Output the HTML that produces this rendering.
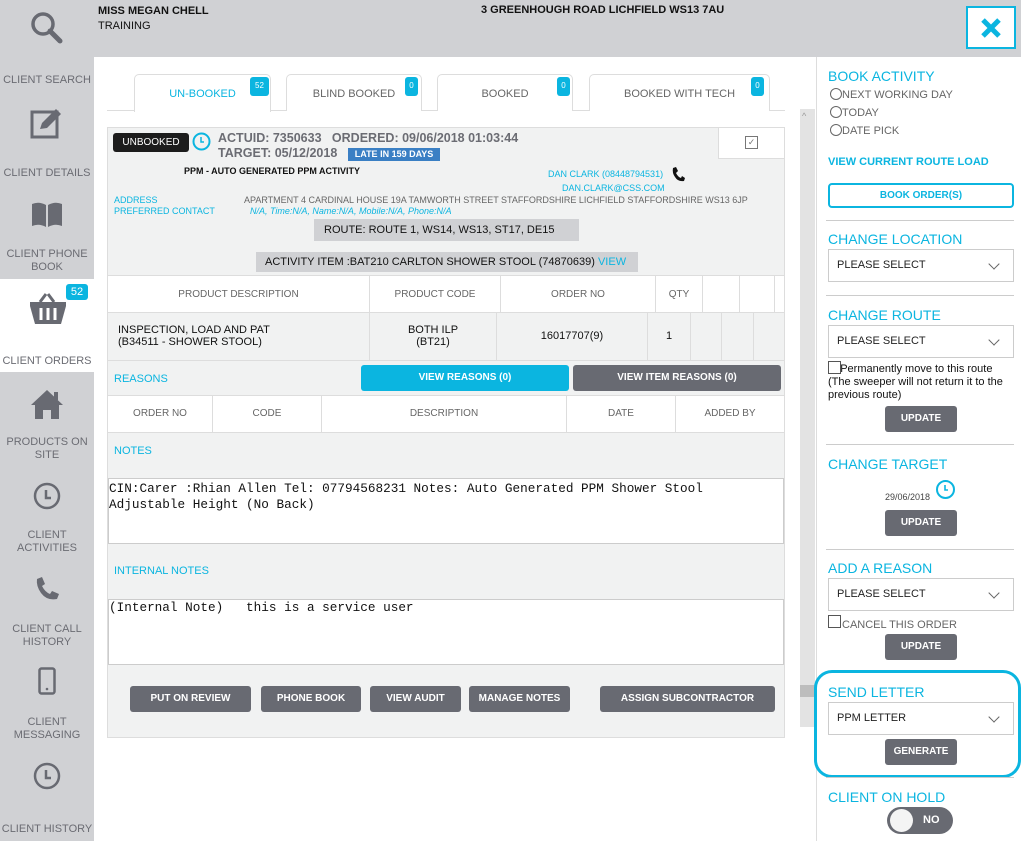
<!DOCTYPE html>
<html><head><meta charset="utf-8"><style>
*{margin:0;padding:0;box-sizing:border-box}
body{width:1021px;height:841px;position:relative;overflow:hidden;background:#fff;font-family:"Liberation Sans",Arial,sans-serif;}
.a{position:absolute}
.sb{color:#6b6c73;font-size:11px;text-align:center;width:94px;left:0;line-height:13px}
.c{color:#0bb5e0}
.tab{position:absolute;top:74px;height:37px;border:1px solid #ddd;border-bottom:none;border-radius:5px 5px 0 0;background:#fff;color:#666;font-size:11px;text-align:center;line-height:38px}
.bdg{position:absolute;background:#0bb5e0;color:#fff;font-size:8px;border-radius:3px;text-align:center;line-height:17px;height:19px;top:3px}
.btn{position:absolute;background:#686a72;color:#fff;font-size:10px;font-weight:bold;text-align:center;border-radius:3px;line-height:26px;height:26px}
.cell{position:absolute;border-right:1px solid #ddd;text-align:center;font-size:10px;color:#666}
.h{position:absolute;left:828px;color:#0bb5e0;font-size:14px}
.sel{position:absolute;left:828px;width:186px;height:33px;border:1px solid #ccc;background:#fff;font-size:11px;color:#222;padding-left:8px;line-height:31px}
.sel:after{content:"";position:absolute;right:15px;top:10px;width:7px;height:7px;border-right:1px solid #666;border-bottom:1px solid #666;transform:rotate(45deg)}
.div{position:absolute;left:826px;width:188px;height:1px;background:#ccc}
.rad{position:absolute;left:830px;font-size:11px;color:#666}
.rad:before{content:"";display:inline-block;width:10px;height:10px;border:1px solid #666;border-radius:50%;vertical-align:-2px}
</style></head><body>
<!-- header -->
<div class="a" style="left:0;top:0;width:1021px;height:57px;background:#d0d1d4"></div>
<div class="a" style="left:98px;top:4px;font-size:11px;font-weight:bold;color:#111;line-height:15px">MISS MEGAN CHELL<br><span style="font-weight:normal">TRAINING</span></div>
<div class="a" style="left:481px;top:4px;font-size:11px;font-weight:bold;color:#111">3 GREENHOUGH ROAD LICHFIELD WS13 7AU</div>
<div class="a" style="left:966px;top:6px;width:50px;height:43px;background:#fff;border:2px solid #0bb5e0"><svg width="46" height="39" viewBox="0 0 46 39"><path d="M15 12 L31 28 M31 12 L15 28" stroke="#0bb5e0" stroke-width="5"/></svg></div>
<!-- sidebar -->
<div class="a" style="left:0;top:57px;width:94px;height:784px;background:#d0d1d4"></div>
<div class="a" style="left:0;top:279px;width:94px;height:93px;background:#fff"></div>
<svg class="a" style="left:29px;top:10px" width="36" height="36"><circle cx="14" cy="14" r="10" fill="none" stroke="#686a72" stroke-width="3.5"/><path d="M21 21 L31 31" stroke="#686a72" stroke-width="5" stroke-linecap="round"/></svg>
<div class="a sb" style="top:74px">CLIENT SEARCH</div>
<svg class="a" style="left:30px;top:107px" width="34" height="32"><rect x="2" y="5" width="25" height="25" fill="none" stroke="#686a72" stroke-width="3"/><path d="M10 22 L12 16 L26 2 L31 7 L17 21 Z" fill="#686a72"/></svg>
<div class="a sb" style="top:167px">CLIENT DETAILS</div>
<svg class="a" style="left:30px;top:200px" width="34" height="30"><path d="M2 4 Q9 1 16 5 L16 27 Q9 23 2 26 Z M18 5 Q25 1 32 4 L32 26 Q25 23 18 27 Z" fill="#686a72"/></svg>
<div class="a sb" style="top:248px">CLIENT PHONE<br>BOOK</div>
<svg class="a" style="left:28px;top:292px" width="40" height="36"><path d="M12 10 L18 2 M26 10 L20 2" stroke="#686a72" stroke-width="3"/><path d="M2 10 H38 V14 L33 32 H7 L2 14 Z" fill="#686a72"/><path d="M13 16 V28 M20 16 V28 M27 16 V28" stroke="#fff" stroke-width="3"/></svg>
<div class="a" style="left:66px;top:284px;width:22px;height:16px;background:#0bb5e0;color:#fff;font-size:11px;text-align:center;line-height:16px;border-radius:3px">52</div>
<div class="a sb" style="top:355px">CLIENT ORDERS</div>
<svg class="a" style="left:30px;top:388px" width="34" height="32"><path d="M17 2 L33 17 H29 V31 H21 V22 H13 V31 H5 V17 H1 Z" fill="#686a72"/><rect x="24" y="4" width="4" height="8" fill="#686a72"/></svg>
<div class="a sb" style="top:436px">PRODUCTS ON<br>SITE</div>
<svg class="a" style="left:32px;top:481px" width="30" height="30"><circle cx="15" cy="15" r="12" fill="none" stroke="#686a72" stroke-width="2.5"/><path d="M14 9 V17 H19" fill="none" stroke="#686a72" stroke-width="2.5"/></svg>
<div class="a sb" style="top:529px">CLIENT<br>ACTIVITIES</div>
<svg class="a" style="left:33px;top:575px" width="28" height="28"><path d="M4 4 L9 2 L12 9 L9 11 Q12 17 17 19 L19 16 L26 19 L24 24 Q14 26 8 18 Q3 11 4 4 Z" fill="#686a72"/></svg>
<div class="a sb" style="top:623px">CLIENT CALL<br>HISTORY</div>
<svg class="a" style="left:38px;top:667px" width="18" height="28"><rect x="1.5" y="1.5" width="15" height="25" rx="2" fill="none" stroke="#686a72" stroke-width="2.5"/><circle cx="9" cy="22" r="1.3" fill="#686a72"/></svg>
<div class="a sb" style="top:716px">CLIENT<br>MESSAGING</div>
<svg class="a" style="left:32px;top:761px" width="30" height="30"><circle cx="15" cy="15" r="12" fill="none" stroke="#686a72" stroke-width="2.5"/><path d="M14 9 V17 H19" fill="none" stroke="#686a72" stroke-width="2.5"/></svg>
<div class="a sb" style="top:823px">CLIENT HISTORY</div>
<!-- tabs -->
<div class="a" style="left:107px;top:110px;width:678px;height:1px;background:#ddd"></div>
<div class="tab" style="left:134px;width:137px;color:#0bb5e0;height:38px">UN-BOOKED</div>
<div class="bdg" style="left:250px;top:77px;width:19px">52</div>
<div class="tab" style="left:286px;width:136px">BLIND BOOKED</div>
<div class="bdg" style="left:405px;top:77px;width:13px">0</div>
<div class="tab" style="left:437px;width:136px">BOOKED</div>
<div class="bdg" style="left:557px;top:77px;width:13px">0</div>
<div class="tab" style="left:589px;width:181px">BOOKED WITH TECH</div>
<div class="bdg" style="left:751px;top:77px;width:13px">0</div>
<!-- scrollbar -->
<div class="a" style="left:800px;top:109px;width:15px;height:618px;background:#e3e3e3"></div>
<div class="a" style="left:800px;top:685px;width:15px;height:12px;background:#bdbdbd"></div>
<div class="a" style="left:802px;top:111px;font-size:9px;color:#999">^</div>
<div class="a" style="left:816px;top:57px;width:1px;height:784px;background:#ddd"></div>
<!-- card -->
<div class="a" style="left:107px;top:127px;width:678px;height:611px;background:#f1f2f2;border:1px solid #ddd"></div>
<div class="a" style="left:113px;top:133px;width:76px;height:19px;background:#1c1c1c;color:#fff;font-size:10px;text-align:center;line-height:19px;border-radius:3px">UNBOOKED</div>
<svg class="a" style="left:192px;top:132px" width="19" height="19"><circle cx="9.5" cy="9.5" r="8" fill="none" stroke="#0bb5e0" stroke-width="2"/><path d="M9 5 V10 H12" fill="none" stroke="#0bb5e0" stroke-width="1.5"/></svg>
<div class="a" style="left:218px;top:131px;font-size:12.5px;font-weight:bold;color:#6b6c73;line-height:15px">ACTUID: 7350633 &nbsp; ORDERED: 09/06/2018 01:03:44<br>TARGET: 05/12/2018</div>
<div class="a" style="left:348px;top:148px;width:92px;height:13px;background:#3a7fc4;color:#fff;font-size:9px;font-weight:bold;text-align:center;line-height:13px">LATE IN 159 DAYS</div>
<div class="a" style="left:718px;top:127px;width:67px;height:32px;background:#fff;border:1px solid #ddd"></div>
<div class="a" style="left:745px;top:136px;width:13px;height:13px;border:1px solid #777;font-size:9px;color:#777;text-align:center;line-height:11px">✓</div>
<div class="a" style="left:184px;top:166px;font-size:9px;font-weight:bold;color:#111">PPM - AUTO GENERATED PPM ACTIVITY</div>
<div class="a c" style="left:548px;top:169px;font-size:9px">DAN CLARK (08448794531)</div>
<svg class="a" style="left:670px;top:166px" width="16" height="17"><path d="M3 2 L6 1 L8 5 L6 7 Q8 11 11 12 L12 10 L15 12 L14 15 Q8 16 5 11 Q2 7 3 2 Z" fill="#111"/></svg>
<div class="a c" style="left:562px;top:183px;font-size:9px">DAN.CLARK@CSS.COM</div>
<div class="a c" style="left:114px;top:195px;font-size:9px;line-height:11px">ADDRESS<br>PREFERRED CONTACT</div>
<div class="a" style="left:244px;top:195px;font-size:9px;color:#666">APARTMENT 4 CARDINAL HOUSE 19A TAMWORTH STREET STAFFORDSHIRE LICHFIELD STAFFORDSHIRE WS13 6JP</div>
<div class="a c" style="left:250px;top:206px;font-size:9px;font-style:italic">N/A, Time:N/A, Name:N/A, Mobile:N/A, Phone:N/A</div>
<div class="a" style="left:314px;top:219px;width:265px;height:22px;background:#d0d1d4;font-size:11px;color:#111;line-height:22px;padding-left:10px">ROUTE: ROUTE 1, WS14, WS13, ST17, DE15</div>
<div class="a" style="left:256px;top:252px;width:382px;height:20px;background:#d0d1d4;font-size:11px;color:#111;line-height:20px;padding-left:9px">ACTIVITY ITEM :BAT210 CARLTON SHOWER STOOL (74870639) <span class="c">VIEW</span></div>
<!-- product table -->
<div class="a" style="left:108px;top:275px;width:676px;height:38px;background:#fff;border-top:1px solid #ddd;border-bottom:1px solid #ddd"></div>
<div class="cell" style="left:108px;top:276px;width:262px;height:37px;line-height:37px">PRODUCT DESCRIPTION</div>
<div class="cell" style="left:370px;top:276px;width:131px;height:37px;line-height:37px">PRODUCT CODE</div>
<div class="cell" style="left:501px;top:276px;width:155px;height:37px;line-height:37px">ORDER NO</div>
<div class="cell" style="left:656px;top:276px;width:47px;height:37px;line-height:37px">QTY</div>
<div class="cell" style="left:703px;top:276px;width:37px;height:37px"></div>
<div class="cell" style="left:740px;top:276px;width:35px;height:37px"></div>
<div class="cell" style="left:108px;top:313px;width:262px;height:47px;text-align:left;padding:11px 0 0 10px;color:#111;font-size:11px;line-height:12px">INSPECTION, LOAD AND PAT<br>(B34511 - SHOWER STOOL)</div>
<div class="cell" style="left:370px;top:313px;width:127px;height:47px;padding-top:11px;color:#111;font-size:11px;line-height:12px">BOTH ILP<br>(BT21)</div>
<div class="cell" style="left:497px;top:313px;width:151px;height:47px;line-height:47px;color:#111;font-size:11px">16017707(9)</div>
<div class="cell" style="left:648px;top:313px;width:43px;height:47px;line-height:47px;color:#111;font-size:11px">1</div>
<div class="cell" style="left:691px;top:313px;width:31px;height:47px"></div>
<div class="cell" style="left:722px;top:313px;width:32px;height:47px"></div>
<div class="a" style="left:108px;top:360px;width:676px;height:1px;background:#ddd"></div>
<div class="a c" style="left:114px;top:373px;font-size:11px">REASONS</div>
<div class="a" style="left:361px;top:365px;width:208px;height:26px;background:#0bb5e0;color:#fff;font-size:10px;font-weight:bold;text-align:center;line-height:26px;border-radius:3px">VIEW REASONS (0)</div>
<div class="btn" style="left:573px;top:365px;width:208px">VIEW ITEM REASONS (0)</div>
<div class="a" style="left:108px;top:395px;width:676px;height:38px;background:#fff;border-top:1px solid #ddd;border-bottom:1px solid #ddd"></div>
<div class="cell" style="left:108px;top:396px;width:105px;height:36px;line-height:36px">ORDER NO</div>
<div class="cell" style="left:213px;top:396px;width:109px;height:36px;line-height:36px">CODE</div>
<div class="cell" style="left:322px;top:396px;width:245px;height:36px;line-height:36px">DESCRIPTION</div>
<div class="cell" style="left:567px;top:396px;width:109px;height:36px;line-height:36px">DATE</div>
<div class="cell" style="left:676px;top:396px;width:108px;height:36px;line-height:36px;border:none">ADDED BY</div>
<div class="a c" style="left:114px;top:445px;font-size:11px">NOTES</div>
<div class="a" style="left:108px;top:478px;width:676px;height:66px;background:#fff;border:1px solid #ccc;font-family:'Liberation Mono',monospace;font-size:12.7px;line-height:16px;padding:2px 0;color:#111">CIN:Carer :Rhian Allen Tel: 07794568231 Notes: Auto Generated PPM Shower Stool Adjustable Height (No Back)</div>
<div class="a c" style="left:114px;top:565px;font-size:11px">INTERNAL NOTES</div>
<div class="a" style="left:108px;top:599px;width:676px;height:66px;background:#fff;border:1px solid #ccc;font-family:'Liberation Mono',monospace;font-size:12.7px;line-height:16px;padding:0 0;color:#111;white-space:pre">(Internal Note)   this is a service user</div>
<div class="btn" style="left:130px;top:686px;width:121px">PUT ON REVIEW</div>
<div class="btn" style="left:261px;top:686px;width:100px">PHONE BOOK</div>
<div class="btn" style="left:370px;top:686px;width:91px">VIEW AUDIT</div>
<div class="btn" style="left:469px;top:686px;width:101px">MANAGE NOTES</div>
<div class="btn" style="left:600px;top:686px;width:175px">ASSIGN SUBCONTRACTOR</div>
<!-- right panel -->
<div class="h" style="top:68px">BOOK ACTIVITY</div>
<div class="rad" style="top:88px">NEXT WORKING DAY</div>
<div class="rad" style="top:106px">TODAY</div>
<div class="rad" style="top:124px">DATE PICK</div>
<div class="a c" style="left:828px;top:156px;font-size:11px;font-weight:bold">VIEW CURRENT ROUTE LOAD</div>
<div class="a" style="left:828px;top:183px;width:186px;height:25px;border:2px solid #0bb5e0;border-radius:4px;color:#0bb5e0;font-size:10px;font-weight:bold;text-align:center;line-height:21px">BOOK ORDER(S)</div>
<div class="div" style="top:220px"></div>
<div class="h" style="top:231px">CHANGE LOCATION</div>
<div class="sel" style="top:249px">PLEASE SELECT</div>
<div class="div" style="top:295px"></div>
<div class="h" style="top:307px">CHANGE ROUTE</div>
<div class="sel" style="top:325px">PLEASE SELECT</div>
<div class="a" style="left:828px;top:361px;width:13px;height:13px;border:1px solid #555;background:#fff"></div>
<div class="a" style="left:828px;top:363px;font-size:11px;color:#111;line-height:13px;width:186px">&nbsp;&nbsp;&nbsp;&nbsp;Permanently move to this route<br>(The sweeper will not return it to the previous route)</div>
<div class="btn" style="left:885px;top:406px;width:72px">UPDATE</div>
<div class="div" style="top:444px"></div>
<div class="h" style="top:456px">CHANGE TARGET</div>
<div class="a" style="left:885px;top:492px;font-size:9px;color:#444">29/06/2018</div>
<svg class="a" style="left:935px;top:479px" width="21" height="21"><circle cx="10.5" cy="10.5" r="8.5" fill="none" stroke="#0bb5e0" stroke-width="2"/><path d="M10 6 V11 H13" fill="none" stroke="#0bb5e0" stroke-width="1.6"/></svg>
<div class="btn" style="left:885px;top:510px;width:72px">UPDATE</div>
<div class="div" style="top:549px"></div>
<div class="h" style="top:560px">ADD A REASON</div>
<div class="sel" style="top:578px">PLEASE SELECT</div>
<div class="a" style="left:828px;top:615px;width:13px;height:13px;border:1px solid #555;background:#fff"></div>
<div class="a" style="left:842px;top:619px;font-size:11px;color:#666">CANCEL THIS ORDER</div>
<div class="btn" style="left:885px;top:634px;width:72px">UPDATE</div>
<div class="a" style="left:814px;top:670px;width:207px;height:108px;border:3px solid #0bb5e0;border-radius:18px"></div>
<div class="h" style="top:684px">SEND LETTER</div>
<div class="sel" style="top:702px">PPM LETTER</div>
<div class="btn" style="left:885px;top:739px;width:72px">GENERATE</div>
<div class="div" style="top:777px"></div>
<div class="h" style="top:789px">CLIENT ON HOLD</div>
<div class="a" style="left:887px;top:807px;width:66px;height:27px;background:#686a72;border-radius:14px;color:#fff;font-size:11px;font-weight:bold;line-height:27px;padding-left:36px">NO</div>
<div class="a" style="left:890px;top:809px;width:23px;height:23px;background:#f4f4f4;border-radius:50%"></div>
</body></html>
